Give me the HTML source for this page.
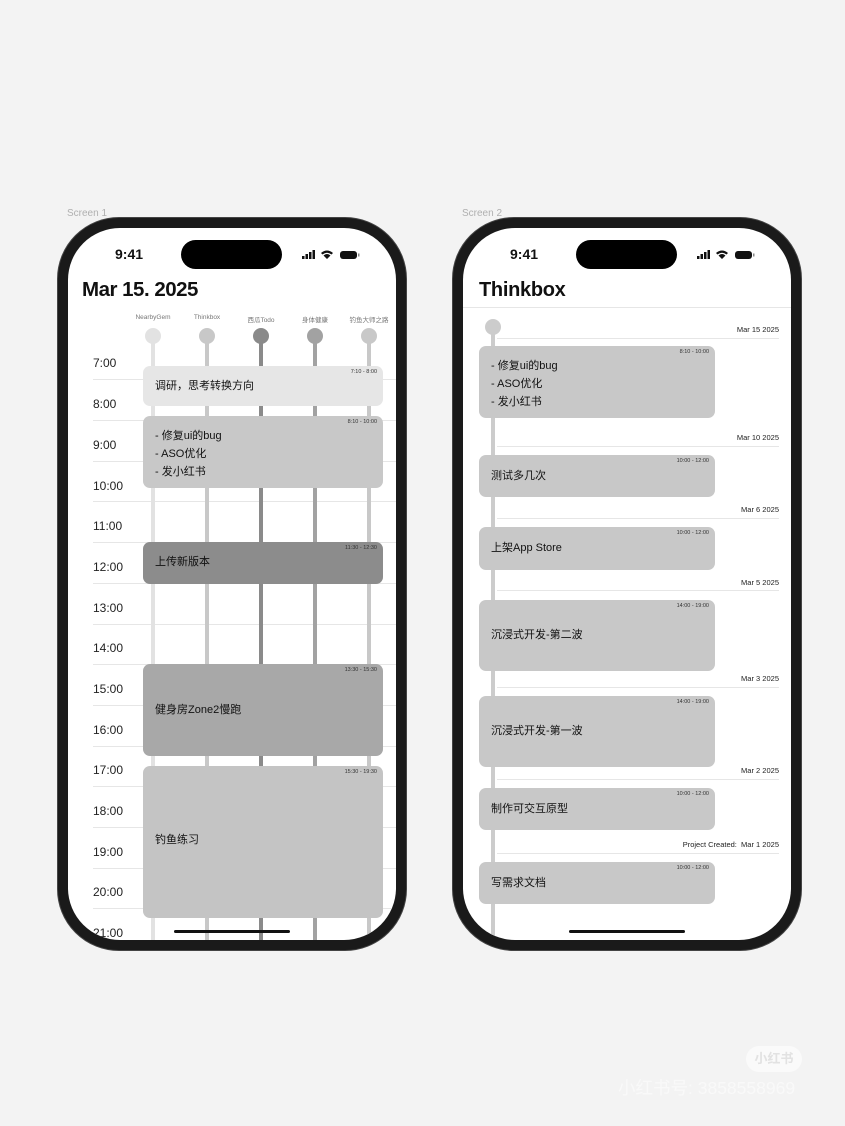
<!DOCTYPE html>
<html><head><meta charset="utf-8"><style>
*{margin:0;padding:0;box-sizing:border-box}
body{width:845px;height:1126px;background:#f3f3f3;position:relative;overflow:hidden;font-family:"Liberation Sans","Noto Sans CJK SC",sans-serif;color:#111}
.a{position:absolute}
.phone{position:absolute;width:350px;height:734px;border-radius:62px;background:#1a1a1a;border:1px solid #444}
.scr{position:absolute;left:10px;top:10px;width:328px;height:712px;border-radius:52px;background:#fff;overflow:hidden}
.lbl{font-size:10px;color:#b0b0b0}
.time{font-size:14px;font-weight:bold;color:#111}
.island{width:101px;height:29px;border-radius:15px;background:#000}
.card{position:absolute;border-radius:7px}
.card .t{position:absolute;right:6px;top:3px;font-size:5.5px;color:#333}
.card .c{position:absolute;left:12px;font-size:11px;color:#111;line-height:18px}
.hr{font-size:12px;color:#222}
.hl{height:1px;background:#e6e6e6}
.d{font-size:7.5px;color:#222;text-align:right}
</style></head><body>
<div class="a lbl" style="left:67px;top:208px">Screen 1</div>
<div class="a lbl" style="left:462px;top:208px">Screen 2</div>

<!-- Phone 1 -->
<div class="phone" style="left:57px;top:217px">
<div class="scr">
 <div class="a time" style="left:47px;top:18px">9:41</div>
 <div class="a island" style="left:113px;top:12px"></div>
 <svg class="a" style="left:234px;top:21px" width="60" height="12"><rect x="0" y="7" width="2.5" height="3" fill="#111"/><rect x="3.5" y="5" width="2.5" height="5" fill="#111"/><rect x="7" y="3" width="2.5" height="7" fill="#111"/><rect x="10.5" y="1" width="2.5" height="9" fill="#111"/><path d="M19 4 Q25 -1 31 4 L29.5 5.5 Q25 2 20.5 5.5Z M21.5 6.5 Q25 3.5 28.5 6.5 L25 10Z" fill="#111"/><rect x="38" y="2" width="17" height="8" rx="3" fill="#111"/><rect x="56" y="4.5" width="1.5" height="3" fill="#888"/></svg>
 <div class="a" style="left:14px;top:50px;font-size:20.5px;font-weight:bold;letter-spacing:-0.5px">Mar 15. 2025</div>
 <div class="a" style="left:55px;top:86px;width:60px;text-align:center;font-size:6.5px;color:#777">NearbyGem</div>
 <div class="a" style="left:109px;top:86px;width:60px;text-align:center;font-size:6.5px;color:#777">Thinkbox</div>
 <div class="a" style="left:163px;top:86px;width:60px;text-align:center;font-size:6.5px;color:#777">西瓜Todo</div>
 <div class="a" style="left:217px;top:86px;width:60px;text-align:center;font-size:6.5px;color:#777">身体健康</div>
 <div class="a" style="left:271px;top:86px;width:60px;text-align:center;font-size:6.5px;color:#777">钓鱼大师之路</div>
 <div class="a" style="left:25px;top:0;width:310px">
  <div class="a hr" style="top:128px">7:00</div><div class="a hl" style="top:151px;width:310px"></div>
  <div class="a hr" style="top:169px">8:00</div><div class="a hl" style="top:192px;width:310px"></div>
  <div class="a hr" style="top:210px">9:00</div><div class="a hl" style="top:233px;width:310px"></div>
  <div class="a hr" style="top:251px">10:00</div><div class="a hl" style="top:273px;width:310px"></div>
  <div class="a hr" style="top:291px">11:00</div><div class="a hl" style="top:314px;width:310px"></div>
  <div class="a hr" style="top:332px">12:00</div><div class="a hl" style="top:355px;width:310px"></div>
  <div class="a hr" style="top:373px">13:00</div><div class="a hl" style="top:396px;width:310px"></div>
  <div class="a hr" style="top:413px">14:00</div><div class="a hl" style="top:436px;width:310px"></div>
  <div class="a hr" style="top:454px">15:00</div><div class="a hl" style="top:477px;width:310px"></div>
  <div class="a hr" style="top:495px">16:00</div><div class="a hl" style="top:518px;width:310px"></div>
  <div class="a hr" style="top:535px">17:00</div><div class="a hl" style="top:558px;width:310px"></div>
  <div class="a hr" style="top:576px">18:00</div><div class="a hl" style="top:599px;width:310px"></div>
  <div class="a hr" style="top:617px">19:00</div><div class="a hl" style="top:640px;width:310px"></div>
  <div class="a hr" style="top:657px">20:00</div><div class="a hl" style="top:680px;width:310px"></div>
  <div class="a hr" style="top:698px">21:00</div>
 </div>
 <div class="a" style="left:77px;top:100px;width:16px;height:16px;border-radius:8px;background:#e2e2e2"></div><div class="a" style="left:83px;top:110px;width:4px;height:620px;background:#e2e2e2"></div>
 <div class="a" style="left:131px;top:100px;width:16px;height:16px;border-radius:8px;background:#c8c8c8"></div><div class="a" style="left:137px;top:110px;width:4px;height:620px;background:#c8c8c8"></div>
 <div class="a" style="left:185px;top:100px;width:16px;height:16px;border-radius:8px;background:#8a8a8a"></div><div class="a" style="left:191px;top:110px;width:4px;height:620px;background:#8a8a8a"></div>
 <div class="a" style="left:239px;top:100px;width:16px;height:16px;border-radius:8px;background:#a2a2a2"></div><div class="a" style="left:245px;top:110px;width:4px;height:620px;background:#a2a2a2"></div>
 <div class="a" style="left:293px;top:100px;width:16px;height:16px;border-radius:8px;background:#c8c8c8"></div><div class="a" style="left:299px;top:110px;width:4px;height:620px;background:#c8c8c8"></div>
 <div class="card" style="left:75px;top:138px;width:240px;height:40px;background:#e6e6e6"><span class="t">7:10 - 8:00</span><div class="c" style="top:11px">调研，思考转换方向</div></div>
 <div class="card" style="left:75px;top:188px;width:240px;height:72px;background:#c8c8c8"><span class="t">8:10 - 10:00</span><div class="c" style="top:11px">- 修复ui的bug<br>- ASO优化<br>- 发小红书</div></div>
 <div class="card" style="left:75px;top:314px;width:240px;height:42px;background:#8c8c8c"><span class="t">11:30 - 12:30</span><div class="c" style="top:11px">上传新版本</div></div>
 <div class="card" style="left:75px;top:436px;width:240px;height:92px;background:#a8a8a8"><span class="t">13:30 - 15:30</span><div class="c" style="top:37px">健身房Zone2慢跑</div></div>
 <div class="card" style="left:75px;top:538px;width:240px;height:152px;background:#c4c4c4"><span class="t">15:30 - 19:30</span><div class="c" style="top:65px">钓鱼练习</div></div>
 <div class="a" style="left:106px;top:702px;width:116px;height:3px;border-radius:2px;background:#111"></div>
</div></div>

<!-- Phone 2 -->
<div class="phone" style="left:452px;top:217px">
<div class="scr">
 <div class="a time" style="left:47px;top:18px">9:41</div>
 <div class="a island" style="left:113px;top:12px"></div>
 <svg class="a" style="left:234px;top:21px" width="60" height="12"><rect x="0" y="7" width="2.5" height="3" fill="#111"/><rect x="3.5" y="5" width="2.5" height="5" fill="#111"/><rect x="7" y="3" width="2.5" height="7" fill="#111"/><rect x="10.5" y="1" width="2.5" height="9" fill="#111"/><path d="M19 4 Q25 -1 31 4 L29.5 5.5 Q25 2 20.5 5.5Z M21.5 6.5 Q25 3.5 28.5 6.5 L25 10Z" fill="#111"/><rect x="38" y="2" width="17" height="8" rx="3" fill="#111"/><rect x="56" y="4.5" width="1.5" height="3" fill="#888"/></svg>
 <div class="a" style="left:16px;top:51px;font-size:20px;font-weight:bold;letter-spacing:-0.3px">Thinkbox</div>
 <div class="a" style="left:0;top:79px;width:328px;height:1px;background:#e6e6e6"></div>
 <div class="a" style="left:22px;top:91px;width:16px;height:16px;border-radius:8px;background:#cccccc"></div>
 <div class="a" style="left:28px;top:100px;width:4px;height:620px;background:#cccccc"></div>
 <div class="a d" style="left:100px;top:97px;width:216px">Mar 15 2025</div><div class="a hl" style="left:34px;top:110px;width:282px"></div>
 <div class="card" style="left:16px;top:118px;width:236px;height:72px;background:#c8c8c8"><span class="t">8:10 - 10:00</span><div class="c" style="top:11px">- 修复ui的bug<br>- ASO优化<br>- 发小红书</div></div>
 <div class="a d" style="left:100px;top:205px;width:216px">Mar 10 2025</div><div class="a hl" style="left:34px;top:218px;width:282px"></div>
 <div class="card" style="left:16px;top:227px;width:236px;height:42px;background:#c8c8c8"><span class="t">10:00 - 12:00</span><div class="c" style="top:12px">测试多几次</div></div>
 <div class="a d" style="left:100px;top:277px;width:216px">Mar 6 2025</div><div class="a hl" style="left:34px;top:290px;width:282px"></div>
 <div class="card" style="left:16px;top:299px;width:236px;height:43px;background:#c8c8c8"><span class="t">10:00 - 12:00</span><div class="c" style="top:12px">上架App Store</div></div>
 <div class="a d" style="left:100px;top:350px;width:216px">Mar 5 2025</div><div class="a hl" style="left:34px;top:362px;width:282px"></div>
 <div class="card" style="left:16px;top:372px;width:236px;height:71px;background:#c8c8c8"><span class="t">14:00 - 19:00</span><div class="c" style="top:26px">沉浸式开发-第二波</div></div>
 <div class="a d" style="left:100px;top:446px;width:216px">Mar 3 2025</div><div class="a hl" style="left:34px;top:459px;width:282px"></div>
 <div class="card" style="left:16px;top:468px;width:236px;height:71px;background:#c8c8c8"><span class="t">14:00 - 19:00</span><div class="c" style="top:26px">沉浸式开发-第一波</div></div>
 <div class="a d" style="left:100px;top:538px;width:216px">Mar 2 2025</div><div class="a hl" style="left:34px;top:551px;width:282px"></div>
 <div class="card" style="left:16px;top:560px;width:236px;height:42px;background:#c8c8c8"><span class="t">10:00 - 12:00</span><div class="c" style="top:12px">制作可交互原型</div></div>
 <div class="a d" style="left:100px;top:612px;width:216px">Project Created:&nbsp; Mar 1 2025</div><div class="a hl" style="left:34px;top:625px;width:282px"></div>
 <div class="card" style="left:16px;top:634px;width:236px;height:42px;background:#c8c8c8"><span class="t">10:00 - 12:00</span><div class="c" style="top:12px">写需求文档</div></div>
 <div class="a" style="left:106px;top:702px;width:116px;height:3px;border-radius:2px;background:#111"></div>
</div></div>

<div class="a" style="left:746px;top:1046px;width:56px;height:26px;border-radius:13px;background:#fafafa;color:#e2e2e2;font-size:13px;font-weight:bold;text-align:center;line-height:26px">小红书</div>
<div class="a" style="left:618px;top:1075px;font-size:17.5px;color:#f9f9f9">小红书号: 3858558969</div>
</body></html>
